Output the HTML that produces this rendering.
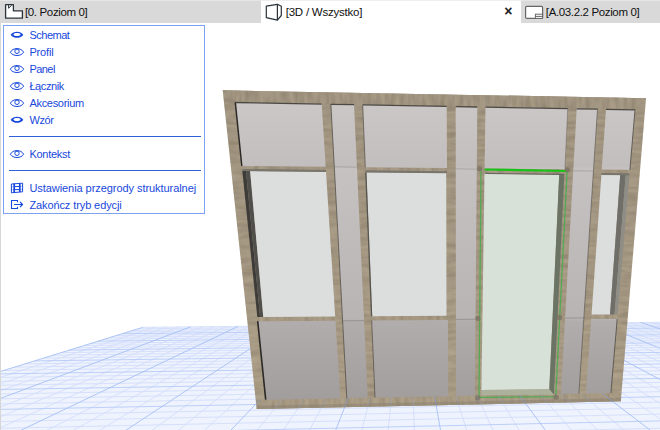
<!DOCTYPE html>
<html lang="pl"><head><meta charset="utf-8"><title>Edycja przegrody strukturalnej</title>
<style>
html,body{margin:0;padding:0;}
body{width:660px;height:430px;overflow:hidden;background:#fff;position:relative;font-family:"Liberation Sans",sans-serif;}
#scene{position:absolute;left:0;top:0;width:660px;height:430px;}
#tabs{position:absolute;left:0;top:0;width:660px;height:23px;background:#d9d9d9;box-shadow:inset 0 1px 0 #e6e6e6;}
#tabs .act{position:absolute;left:261px;top:0;width:260px;height:23px;background:#fff;box-shadow:inset 0 1px 0 #eee;}
.tab{position:absolute;top:0;height:23px;line-height:24px;font-size:11.5px;color:#111;white-space:nowrap;}
.tab svg{position:absolute;top:0;left:0;}
#lb{position:absolute;left:0;top:23px;width:1px;height:407px;background:#d6d6d6;}
#pal{position:absolute;left:3px;top:25px;width:200px;height:187px;border:1px solid #7aa2f0;background:#fff;}
.it{position:absolute;left:25.4px;font-size:11px;color:#1848dc;white-space:nowrap;line-height:14px;}
.ic{position:absolute;left:5px;}
.sep{position:absolute;left:5px;width:192px;height:1px;background:#2f62d8;}
</style></head><body>
<svg id="scene" width="660" height="430" viewBox="0 0 660 430">
<g id="grid">
<polygon points="142.8,327.3 1786.3,311.3 3300.3,384.2 -353.2,481.2" fill="#eff3fe"/>
<path id="gminh" d="M142.8 327.3L1786.3 311.3M137.9 328.8L1806.6 312.3M132.8 330.4L1827.6 313.3M127.6 332.0L1849.2 314.3M116.4 335.5L1894.4 316.5M110.5 337.3L1918.1 317.6M104.3 339.2L1942.5 318.8M91.2 343.3L1993.8 321.3M84.2 345.5L2020.8 322.6M76.9 347.8L2048.7 323.9M61.2 352.6L2107.6 326.8M52.8 355.2L2138.6 328.3M44.0 358.0L2170.8 329.8M24.9 363.9L2238.9 333.1M14.6 367.1L2274.9 334.8M3.8 370.4L2312.5 336.6M-19.8 377.8L2392.2 340.5M-32.7 381.8L2434.6 342.5M-46.3 386.0L2478.9 344.6M-76.4 395.3L2573.5 349.2M-92.9 400.5L2624.1 351.6M-110.7 406.0L2677.2 354.2M-150.2 418.2L2791.3 359.7M-172.3 425.1L2852.7 362.6M-196.2 432.5L2917.5 365.7M-250.6 449.4L3057.8 372.5M-281.5 459.0L3134.0 376.1M-315.6 469.6L3214.7 380.0" stroke="#d2defb" stroke-width="0.9" fill="none"/>
<path id="gmin" d="M154.8 327.2L-316.8 480.3M166.8 327.1L-280.6 479.3M178.7 327.0L-244.8 478.3M202.5 326.7L-173.9 476.5M214.4 326.6L-139.0 475.5M226.2 326.5L-104.3 474.6M249.7 326.3L-35.7 472.8M261.4 326.1L-1.8 471.9M273.1 326.0L31.8 471.0M296.4 325.8L98.2 469.2M308.0 325.7L131.1 468.4M319.5 325.6L163.6 467.5M342.5 325.4L228.0 465.8M353.9 325.2L259.9 464.9M365.4 325.1L291.4 464.1M388.1 324.9L353.9 462.4M399.4 324.8L384.7 461.6M410.7 324.7L415.4 460.8M433.2 324.5L475.9 459.2M444.4 324.4L505.9 458.4M455.6 324.3L535.6 457.6M477.8 324.0L594.4 456.0M488.9 323.9L623.5 455.3M499.9 323.8L652.3 454.5M521.9 323.6L709.4 453.0M532.9 323.5L737.6 452.2M543.8 323.4L765.7 451.5M565.5 323.2L821.1 450.0M576.4 323.1L848.5 449.3M587.2 323.0L875.8 448.6M608.7 322.8L929.7 447.1M619.4 322.7L956.3 446.4M630.1 322.6L982.8 445.7M651.4 322.4L1035.2 444.3M662.0 322.2L1061.1 443.6M672.6 322.1L1086.9 443.0M693.6 321.9L1137.8 441.6M704.1 321.8L1163.1 440.9M714.6 321.7L1188.1 440.3M735.4 321.5L1237.7 439.0M745.8 321.4L1262.2 438.3M756.1 321.3L1286.6 437.7M776.7 321.1L1334.9 436.4M787.0 321.0L1358.7 435.7M797.2 320.9L1382.5 435.1M817.6 320.7L1429.5 433.9M827.8 320.6L1452.7 433.2M837.9 320.5L1475.8 432.6M858.1 320.3L1521.6 431.4M868.1 320.2L1544.3 430.8M878.2 320.1L1566.8 430.2M898.1 320.0L1611.4 429.0M908.1 319.9L1633.5 428.4M918.0 319.8L1655.4 427.9M937.7 319.6L1698.9 426.7M947.6 319.5L1720.4 426.1M957.4 319.4L1741.8 425.6M977.0 319.2L1784.2 424.4M986.7 319.1L1805.1 423.9M996.4 319.0L1826.0 423.3M1015.8 318.8L1867.3 422.2M1025.4 318.7L1887.8 421.7M1035.0 318.6L1908.2 421.1M1054.2 318.4L1948.5 420.1M1063.7 318.3L1968.5 419.5M1073.2 318.2L1988.3 419.0M1092.2 318.1L2027.7 418.0M1101.6 318.0L2047.2 417.4M1111.0 317.9L2066.6 416.9M1129.8 317.7L2105.0 415.9M1139.2 317.6L2124.0 415.4M1148.5 317.5L2142.9 414.9M1167.1 317.3L2180.4 413.9M1176.3 317.2L2199.0 413.4M1185.5 317.2L2217.5 412.9M1203.9 317.0L2254.1 411.9M1213.1 316.9L2272.3 411.5M1222.2 316.8L2290.4 411.0M1240.4 316.6L2326.2 410.0M1249.5 316.5L2343.9 409.6M1258.6 316.4L2361.5 409.1M1276.6 316.3L2396.5 408.2M1285.6 316.2L2413.9 407.7M1294.5 316.1L2431.1 407.2M1312.4 315.9L2465.3 406.3M1321.3 315.8L2482.3 405.9M1330.1 315.7L2499.1 405.4M1347.8 315.6L2532.6 404.6M1356.6 315.5L2549.1 404.1M1365.4 315.4L2565.6 403.7M1382.9 315.2L2598.3 402.8M1391.6 315.2L2614.5 402.4M1400.3 315.1L2630.7 401.9M1417.6 314.9L2662.7 401.1M1426.3 314.8L2678.5 400.7M1434.9 314.7L2694.3 400.3M1452.0 314.6L2725.6 399.4M1460.6 314.5L2741.1 399.0M1469.1 314.4L2756.6 398.6M1486.1 314.2L2787.2 397.8M1494.6 314.1L2802.4 397.4M1503.0 314.1L2817.5 397.0M1519.8 313.9L2847.5 396.2M1528.2 313.8L2862.4 395.8M1536.6 313.7L2877.2 395.4M1553.3 313.6L2906.5 394.6M1561.6 313.5L2921.1 394.2M1569.9 313.4L2935.6 393.8M1586.4 313.3L2964.4 393.1M1594.6 313.2L2978.6 392.7M1602.8 313.1L2992.8 392.3M1619.2 312.9L3021.0 391.6M1627.3 312.9L3035.0 391.2M1635.4 312.8L3048.9 390.8M1651.6 312.6L3076.5 390.1M1659.7 312.5L3090.2 389.7M1667.8 312.5L3103.8 389.4M1683.8 312.3L3130.9 388.7M1691.8 312.2L3144.3 388.3M1699.8 312.2L3157.7 387.9M1715.7 312.0L3184.2 387.2M1723.6 311.9L3197.3 386.9M1731.5 311.8L3210.4 386.5M1747.3 311.7L3236.4 385.8M1755.1 311.6L3249.3 385.5M1762.9 311.5L3262.2 385.2M1778.5 311.4L3287.7 384.5M1786.3 311.3L3300.3 384.2" stroke="#d2defb" stroke-width="0.9" fill="none"/>
<path id="gmajh" d="M122.1 333.7L1871.4 315.4M97.9 341.2L1967.7 320.0M69.2 350.1L2077.6 325.3M34.7 360.9L2204.2 331.4M-7.7 374.0L2351.5 338.5M-60.9 390.5L2525.1 346.9M-129.7 411.9L2732.8 356.8M-222.2 440.6L2985.7 369.0M-353.2 481.2L3300.3 384.2" stroke="#b7cbf7" stroke-width="0.9" fill="none"/>
<path id="gmaj" d="M142.8 327.3L-353.2 481.2M190.7 326.8L-209.2 477.4M238.0 326.4L-69.8 473.7M284.8 325.9L65.2 470.1M331.0 325.5L196.0 466.6M376.7 325.0L322.8 463.3M422.0 324.6L445.8 460.0M466.7 324.1L565.1 456.8M510.9 323.7L681.0 453.7M554.7 323.3L793.5 450.8M598.0 322.9L902.8 447.9M640.8 322.5L1009.1 445.0M683.1 322.0L1112.4 442.3M725.0 321.6L1213.0 439.6M766.4 321.2L1310.8 437.0M807.4 320.8L1406.0 434.5M848.0 320.4L1498.8 432.0M888.2 320.0L1589.1 429.6M927.9 319.7L1677.2 427.3M967.2 319.3L1763.0 425.0M1006.1 318.9L1846.7 422.8M1044.6 318.5L1928.4 420.6M1082.7 318.2L2008.1 418.5M1120.4 317.8L2085.8 416.4M1157.8 317.4L2161.7 414.4M1194.8 317.1L2235.9 412.4M1231.4 316.7L2308.3 410.5M1267.6 316.4L2379.1 408.6M1303.5 316.0L2448.3 406.8M1339.0 315.7L2515.9 405.0M1374.1 315.3L2582.0 403.2M1409.0 315.0L2646.7 401.5M1443.5 314.6L2710.0 399.8M1477.6 314.3L2771.9 398.2M1511.4 314.0L2832.6 396.6M1544.9 313.7L2891.9 395.0M1578.1 313.3L2950.0 393.5M1611.0 313.0L3007.0 391.9M1643.5 312.7L3062.7 390.5M1675.8 312.4L3117.4 389.0M1707.7 312.1L3171.0 387.6M1739.4 311.8L3223.5 386.2M1770.7 311.5L3274.9 384.8" stroke="#a6bff5" stroke-width="0.9" fill="none"/>
</g>
<defs>
<linearGradient id="pg" gradientUnits="userSpaceOnUse" x1="0" y1="100" x2="0" y2="400"><stop offset="0.01" stop-color="#cbc7c6"/><stop offset="0.223" stop-color="#c2bebd"/><stop offset="0.227" stop-color="#c6c2c1"/><stop offset="0.73" stop-color="#b8b4b3"/><stop offset="0.737" stop-color="#b1adac"/><stop offset="0.99" stop-color="#a29e9d"/></linearGradient>
<linearGradient id="rvL" x1="0" y1="0" x2="1" y2="0"><stop offset="0" stop-color="#4f4e49"/><stop offset="1" stop-color="#8b8a84"/></linearGradient>
<linearGradient id="rvR" x1="0" y1="0" x2="1" y2="0"><stop offset="0" stop-color="#63625c"/><stop offset="1" stop-color="#8d8c85"/></linearGradient>
<linearGradient id="fg" gradientUnits="userSpaceOnUse" x1="0" y1="90" x2="0" y2="410"><stop offset="0" stop-color="#9f9481"/><stop offset="0.5" stop-color="#a39783"/><stop offset="1" stop-color="#a99c86"/></linearGradient>
<filter id="texd" x="0" y="0" width="100%" height="100%" color-interpolation-filters="sRGB"><feTurbulence type="fractalNoise" baseFrequency="0.05 0.22" numOctaves="2" seed="4"/><feColorMatrix type="matrix" values="0 0 0 0 0.42  0 0 0 0 0.36  0 0 0 0 0.28  2.6 0 0 0 -0.9"/><feComposite in2="SourceGraphic" operator="in"/></filter>
<filter id="texl" x="0" y="0" width="100%" height="100%" color-interpolation-filters="sRGB"><feTurbulence type="fractalNoise" baseFrequency="0.05 0.2" numOctaves="2" seed="11"/><feColorMatrix type="matrix" values="0 0 0 0 0.82  0 0 0 0 0.75  0 0 0 0 0.63  2.6 0 0 0 -0.9"/><feComposite in2="SourceGraphic" operator="in"/></filter>
<filter id="texdh" x="0" y="0" width="100%" height="100%" color-interpolation-filters="sRGB"><feTurbulence type="fractalNoise" baseFrequency="0.22 0.05" numOctaves="2" seed="7"/><feColorMatrix type="matrix" values="0 0 0 0 0.42  0 0 0 0 0.36  0 0 0 0 0.28  2.6 0 0 0 -0.9"/><feComposite in2="SourceGraphic" operator="in"/></filter>
<filter id="texlh" x="0" y="0" width="100%" height="100%" color-interpolation-filters="sRGB"><feTurbulence type="fractalNoise" baseFrequency="0.2 0.05" numOctaves="2" seed="15"/><feColorMatrix type="matrix" values="0 0 0 0 0.82  0 0 0 0 0.75  0 0 0 0 0.63  2.6 0 0 0 -0.9"/><feComposite in2="SourceGraphic" operator="in"/></filter>
</defs>
<polygon points="222.7,90.3 646.0,98.2 620.8,401.3 256.7,409.0" fill="url(#fg)"/>
<polygon points="222.7,90.3 646.0,98.2 620.8,401.3 256.7,409.0" fill="#000" filter="url(#texd)" opacity="0.22"/>
<polygon points="222.7,90.3 646.0,98.2 620.8,401.3 256.7,409.0" fill="#000" filter="url(#texl)" opacity="0.22"/>
<path d="M222.7 90.3L646.0 98.2L635.0 109.7L235.3 102.3ZM265.7 399.7L610.9 393.0L620.8 401.3L256.7 409.0ZM241.8 166.0L325.7 166.8L326.0 171.8L242.3 170.8ZM257.3 317.0L335.2 316.5L335.5 320.7L257.7 321.2ZM365.3 167.2L447.0 168.0L447.1 173.1L365.5 172.2ZM371.6 316.2L447.8 315.7L447.9 320.0L371.7 320.5ZM601.7 169.5L629.9 169.8L629.4 175.1L601.4 174.8ZM591.6 314.6L617.6 314.5L617.2 319.0L591.2 319.1ZM484.6 168.4L564.9 169.2L564.6 174.8L484.5 173.8Z" fill="url(#fg)"/>
<path d="M222.7 90.3L646.0 98.2L635.0 109.7L235.3 102.3ZM265.7 399.7L610.9 393.0L620.8 401.3L256.7 409.0ZM241.8 166.0L325.7 166.8L326.0 171.8L242.3 170.8ZM257.3 317.0L335.2 316.5L335.5 320.7L257.7 321.2ZM365.3 167.2L447.0 168.0L447.1 173.1L365.5 172.2ZM371.6 316.2L447.8 315.7L447.9 320.0L371.7 320.5ZM601.7 169.5L629.9 169.8L629.4 175.1L601.4 174.8ZM591.6 314.6L617.6 314.5L617.2 319.0L591.2 319.1ZM484.6 168.4L564.9 169.2L564.6 174.8L484.5 173.8Z" fill="#000" filter="url(#texdh)" opacity="0.22"/>
<path d="M222.7 90.3L646.0 98.2L635.0 109.7L235.3 102.3ZM265.7 399.7L610.9 393.0L620.8 401.3L256.7 409.0ZM241.8 166.0L325.7 166.8L326.0 171.8L242.3 170.8ZM257.3 317.0L335.2 316.5L335.5 320.7L257.7 321.2ZM365.3 167.2L447.0 168.0L447.1 173.1L365.5 172.2ZM371.6 316.2L447.8 315.7L447.9 320.0L371.7 320.5ZM601.7 169.5L629.9 169.8L629.4 175.1L601.4 174.8ZM591.6 314.6L617.6 314.5L617.2 319.0L591.2 319.1ZM484.6 168.4L564.9 169.2L564.6 174.8L484.5 173.8Z" fill="#000" filter="url(#texlh)" opacity="0.22"/>
<path d="M222.7 90.3L235.3 102.3" stroke="#8d8474" stroke-width="0.8" stroke-opacity="0.45"/>
<path d="M646.0 98.2L635.0 109.7" stroke="#8d8474" stroke-width="0.8" stroke-opacity="0.45"/>
<path d="M620.8 401.3L610.9 393.0" stroke="#8d8474" stroke-width="0.8" stroke-opacity="0.45"/>
<path d="M256.7 409.0L265.7 399.7" stroke="#8d8474" stroke-width="0.8" stroke-opacity="0.45"/>
<polygon points="235.3,102.3 321.7,103.9 325.7,166.8 241.8,166.0" fill="url(#pg)"/>
<polygon points="257.7,321.2 335.5,320.7 340.4,398.3 265.7,399.7" fill="url(#pg)"/>
<polygon points="330.9,104.1 354.0,104.5 367.7,397.7 346.8,398.1" fill="url(#pg)"/>
<path d="M334.3 166.8L356.9 167.2" stroke="#a9a5a1" stroke-width="1"/>
<path d="M342.6 320.8L364.1 320.6" stroke="#989490" stroke-width="1"/>
<polygon points="362.7,104.7 446.7,106.2 447.0,168.0 365.3,167.2" fill="url(#pg)"/>
<polygon points="371.7,320.5 447.9,320.0 448.3,396.2 375.0,397.6" fill="url(#pg)"/>
<polygon points="455.7,106.4 477.3,106.8 474.9,395.6 456.0,396.0" fill="url(#pg)"/>
<path d="M455.8 168.8L476.8 169.2" stroke="#a9a5a1" stroke-width="1"/>
<path d="M455.9 319.4L475.5 319.2" stroke="#989490" stroke-width="1"/>
<polygon points="485.5,106.9 567.7,108.5 564.9,169.2 484.6,168.4" fill="url(#pg)"/>
<polygon points="576.7,108.6 597.5,109.0 578.9,393.6 560.9,394.0" fill="url(#pg)"/>
<path d="M573.3 170.8L593.5 171.1" stroke="#a9a5a1" stroke-width="1"/>
<path d="M565.1 318.1L583.9 317.9" stroke="#989490" stroke-width="1"/>
<polygon points="606.0,109.2 635.0,109.7 629.9,169.8 601.7,169.5" fill="url(#pg)"/>
<polygon points="591.2,319.1 617.2,319.0 610.9,393.0 586.0,393.5" fill="url(#pg)"/>
<path d="M235.3 102.5L321.7 104.1" stroke="#3f3d39" stroke-width="1.3" stroke-opacity="0.90" fill="none"/>
<path d="M330.9 104.3L354.0 104.7" stroke="#3f3d39" stroke-width="1.3" stroke-opacity="0.90" fill="none"/>
<path d="M362.7 104.9L446.7 106.4" stroke="#3f3d39" stroke-width="1.3" stroke-opacity="0.90" fill="none"/>
<path d="M455.7 106.6L477.3 107.0" stroke="#3f3d39" stroke-width="1.3" stroke-opacity="0.90" fill="none"/>
<path d="M485.5 107.1L567.7 108.7" stroke="#3f3d39" stroke-width="1.3" stroke-opacity="0.90" fill="none"/>
<path d="M576.7 108.8L597.5 109.2" stroke="#3f3d39" stroke-width="1.3" stroke-opacity="0.90" fill="none"/>
<path d="M606.0 109.4L635.0 109.9" stroke="#3f3d39" stroke-width="1.3" stroke-opacity="0.90" fill="none"/>
<path d="M235.3 102.3L241.8 166.0" stroke="#2b2a27" stroke-width="1.5" stroke-opacity="1.00" fill="none"/>
<path d="M257.7 321.2L265.7 399.7" stroke="#2b2a27" stroke-width="1.6" stroke-opacity="1.00" fill="none"/>
<path d="M330.9 104.1L346.8 398.1" stroke="#3f3d39" stroke-width="1.0" stroke-opacity="0.65" fill="none"/>
<path d="M362.7 104.7L365.3 167.2" stroke="#3f3d39" stroke-width="1.0" stroke-opacity="0.60" fill="none"/>
<path d="M371.7 320.5L375.0 397.6" stroke="#3f3d39" stroke-width="1.0" stroke-opacity="0.60" fill="none"/>
<path d="M567.7 108.5L564.9 169.2" stroke="#3f3d39" stroke-width="1.0" stroke-opacity="0.30" fill="none"/>
<path d="M597.5 109.0L578.9 393.6" stroke="#3f3d39" stroke-width="1.0" stroke-opacity="0.50" fill="none"/>
<path d="M635.0 109.7L629.9 169.8" stroke="#3f3d39" stroke-width="1.0" stroke-opacity="0.70" fill="none"/>
<path d="M617.2 319.0L610.9 393.0" stroke="#3f3d39" stroke-width="1.0" stroke-opacity="0.70" fill="none"/>
<linearGradient id="rv1" gradientUnits="userSpaceOnUse" x1="247" y1="240" x2="255" y2="239.3"><stop offset="0" stop-color="#3b3a37"/><stop offset="0.45" stop-color="#43423f"/><stop offset="0.55" stop-color="#53524e"/><stop offset="1" stop-color="#5d5c57"/></linearGradient>
<linearGradient id="rv7" gradientUnits="userSpaceOnUse" x1="615" y1="240" x2="624.5" y2="240.8"><stop offset="0" stop-color="#6b6a65"/><stop offset="0.55" stop-color="#74736d"/><stop offset="0.65" stop-color="#8b8a83"/><stop offset="1" stop-color="#939189"/></linearGradient>
<polygon points="242.3,170.8 246.0,170.9 260.1,317.0 257.3,317.0" fill="#3d3c39"/>
<polygon points="246.0,170.9 250.1,170.9 263.3,317.0 260.1,317.0" fill="#504f4b"/>
<polygon points="250.1,170.9 326.0,171.8 335.2,316.5 263.3,317.0" fill="#dcdedd"/>
<polygon points="366.4,172.2 446.2,173.1 446.5,315.7 372.2,316.2" fill="#dcdedd"/>
<path d="M365.8 172.2L371.6 316.2" stroke="#55544f" stroke-width="1.3"/>
<polygon points="484.5,173.8 559.2,174.7 549.3,389.3 481.4,390.0" fill="#d7e1d8"/>
<polygon points="559.2,174.7 564.3,174.8 553.9,394.7 549.3,389.3" fill="#6b7364"/>
<polygon points="481.4,390.0 549.3,389.3 553.9,394.7 481.3,395.2" fill="#abb19b"/>
<polygon points="601.4,174.8 620.2,175.0 610.0,314.5 591.6,314.6" fill="#dcdedd"/>
<polygon points="620.2,175.0 625.7,175.1 614.5,314.5 610.0,314.5" fill="#6f6e69"/>
<polygon points="625.7,175.1 629.4,175.1 617.6,314.5 614.5,314.5" fill="#8e8d86"/>
<polygon points="242.3,168.9 326.0,169.9 326.0,172.0 242.3,171.0" fill="#77756c"/>
<polygon points="365.5,170.3 447.1,171.2 447.1,173.3 365.5,172.4" fill="#77756c"/>
<polygon points="601.4,172.9 629.4,173.2 629.4,175.3 601.4,175.0" fill="#77756c"/>
<path d="M481 168.5L479 397.3L555.7 396.7L567.2 169.8" stroke="#52ab52" stroke-width="1.25" fill="none"/>
<path d="M484.6 169.5L566.5 171" stroke="#18c318" stroke-width="2.2" fill="none"/>
<path d="M485.3 173.4L564.3 174.4" stroke="#66655e" stroke-width="1.1" fill="none"/>
<circle cx="479.6" cy="168.8" r="2.6" fill="#7c7465" fill-opacity="0.85"/>
<circle cx="567.5" cy="169.8" r="2.6" fill="#7c7465" fill-opacity="0.85"/>
<circle cx="477.9" cy="318.3" r="2.6" fill="#7c7465" fill-opacity="0.85"/>
<circle cx="559.6" cy="317.4" r="2.6" fill="#7c7465" fill-opacity="0.85"/>
<circle cx="477.7" cy="397.8" r="2.6" fill="#7c7465" fill-opacity="0.85"/>
<circle cx="556.2" cy="397.2" r="2.6" fill="#7c7465" fill-opacity="0.85"/>
<polygon points="256.3,405.8 621.1,398.1 620.8,401.3 256.7,409.0" fill="#857c6c" opacity="0.45"/>
<clipPath id="bfc"><polygon points="255.7,399.9 621.5,392.8 620.8,401.3 256.7,409.0"/></clipPath>
<g clip-path="url(#bfc)"><path d="M142.8 327.3L-353.2 481.2M190.7 326.8L-209.2 477.4M238.0 326.4L-69.8 473.7M284.8 325.9L65.2 470.1M331.0 325.5L196.0 466.6M376.7 325.0L322.8 463.3M422.0 324.6L445.8 460.0M466.7 324.1L565.1 456.8M510.9 323.7L681.0 453.7M554.7 323.3L793.5 450.8M598.0 322.9L902.8 447.9M640.8 322.5L1009.1 445.0M683.1 322.0L1112.4 442.3M725.0 321.6L1213.0 439.6M766.4 321.2L1310.8 437.0M807.4 320.8L1406.0 434.5M848.0 320.4L1498.8 432.0M888.2 320.0L1589.1 429.6M927.9 319.7L1677.2 427.3M967.2 319.3L1763.0 425.0M1006.1 318.9L1846.7 422.8M1044.6 318.5L1928.4 420.6M1082.7 318.2L2008.1 418.5M1120.4 317.8L2085.8 416.4M1157.8 317.4L2161.7 414.4M1194.8 317.1L2235.9 412.4M1231.4 316.7L2308.3 410.5M1267.6 316.4L2379.1 408.6M1303.5 316.0L2448.3 406.8M1339.0 315.7L2515.9 405.0M1374.1 315.3L2582.0 403.2M1409.0 315.0L2646.7 401.5M1443.5 314.6L2710.0 399.8M1477.6 314.3L2771.9 398.2M1511.4 314.0L2832.6 396.6M1544.9 313.7L2891.9 395.0M1578.1 313.3L2950.0 393.5M1611.0 313.0L3007.0 391.9M1643.5 312.7L3062.7 390.5M1675.8 312.4L3117.4 389.0M1707.7 312.1L3171.0 387.6M1739.4 311.8L3223.5 386.2M1770.7 311.5L3274.9 384.8" stroke="#7d9ce6" stroke-width="0.9" stroke-opacity="0.6" fill="none"/><path d="M154.8 327.2L-316.8 480.3M166.8 327.1L-280.6 479.3M178.7 327.0L-244.8 478.3M202.5 326.7L-173.9 476.5M214.4 326.6L-139.0 475.5M226.2 326.5L-104.3 474.6M249.7 326.3L-35.7 472.8M261.4 326.1L-1.8 471.9M273.1 326.0L31.8 471.0M296.4 325.8L98.2 469.2M308.0 325.7L131.1 468.4M319.5 325.6L163.6 467.5M342.5 325.4L228.0 465.8M353.9 325.2L259.9 464.9M365.4 325.1L291.4 464.1M388.1 324.9L353.9 462.4M399.4 324.8L384.7 461.6M410.7 324.7L415.4 460.8M433.2 324.5L475.9 459.2M444.4 324.4L505.9 458.4M455.6 324.3L535.6 457.6M477.8 324.0L594.4 456.0M488.9 323.9L623.5 455.3M499.9 323.8L652.3 454.5M521.9 323.6L709.4 453.0M532.9 323.5L737.6 452.2M543.8 323.4L765.7 451.5M565.5 323.2L821.1 450.0M576.4 323.1L848.5 449.3M587.2 323.0L875.8 448.6M608.7 322.8L929.7 447.1M619.4 322.7L956.3 446.4M630.1 322.6L982.8 445.7M651.4 322.4L1035.2 444.3M662.0 322.2L1061.1 443.6M672.6 322.1L1086.9 443.0M693.6 321.9L1137.8 441.6M704.1 321.8L1163.1 440.9M714.6 321.7L1188.1 440.3M735.4 321.5L1237.7 439.0M745.8 321.4L1262.2 438.3M756.1 321.3L1286.6 437.7M776.7 321.1L1334.9 436.4M787.0 321.0L1358.7 435.7M797.2 320.9L1382.5 435.1M817.6 320.7L1429.5 433.9M827.8 320.6L1452.7 433.2M837.9 320.5L1475.8 432.6M858.1 320.3L1521.6 431.4M868.1 320.2L1544.3 430.8M878.2 320.1L1566.8 430.2M898.1 320.0L1611.4 429.0M908.1 319.9L1633.5 428.4M918.0 319.8L1655.4 427.9M937.7 319.6L1698.9 426.7M947.6 319.5L1720.4 426.1M957.4 319.4L1741.8 425.6M977.0 319.2L1784.2 424.4M986.7 319.1L1805.1 423.9M996.4 319.0L1826.0 423.3M1015.8 318.8L1867.3 422.2M1025.4 318.7L1887.8 421.7M1035.0 318.6L1908.2 421.1M1054.2 318.4L1948.5 420.1M1063.7 318.3L1968.5 419.5M1073.2 318.2L1988.3 419.0M1092.2 318.1L2027.7 418.0M1101.6 318.0L2047.2 417.4M1111.0 317.9L2066.6 416.9M1129.8 317.7L2105.0 415.9M1139.2 317.6L2124.0 415.4M1148.5 317.5L2142.9 414.9M1167.1 317.3L2180.4 413.9M1176.3 317.2L2199.0 413.4M1185.5 317.2L2217.5 412.9M1203.9 317.0L2254.1 411.9M1213.1 316.9L2272.3 411.5M1222.2 316.8L2290.4 411.0M1240.4 316.6L2326.2 410.0M1249.5 316.5L2343.9 409.6M1258.6 316.4L2361.5 409.1M1276.6 316.3L2396.5 408.2M1285.6 316.2L2413.9 407.7M1294.5 316.1L2431.1 407.2M1312.4 315.9L2465.3 406.3M1321.3 315.8L2482.3 405.9M1330.1 315.7L2499.1 405.4M1347.8 315.6L2532.6 404.6M1356.6 315.5L2549.1 404.1M1365.4 315.4L2565.6 403.7M1382.9 315.2L2598.3 402.8M1391.6 315.2L2614.5 402.4M1400.3 315.1L2630.7 401.9M1417.6 314.9L2662.7 401.1M1426.3 314.8L2678.5 400.7M1434.9 314.7L2694.3 400.3M1452.0 314.6L2725.6 399.4M1460.6 314.5L2741.1 399.0M1469.1 314.4L2756.6 398.6M1486.1 314.2L2787.2 397.8M1494.6 314.1L2802.4 397.4M1503.0 314.1L2817.5 397.0M1519.8 313.9L2847.5 396.2M1528.2 313.8L2862.4 395.8M1536.6 313.7L2877.2 395.4M1553.3 313.6L2906.5 394.6M1561.6 313.5L2921.1 394.2M1569.9 313.4L2935.6 393.8M1586.4 313.3L2964.4 393.1M1594.6 313.2L2978.6 392.7M1602.8 313.1L2992.8 392.3M1619.2 312.9L3021.0 391.6M1627.3 312.9L3035.0 391.2M1635.4 312.8L3048.9 390.8M1651.6 312.6L3076.5 390.1M1659.7 312.5L3090.2 389.7M1667.8 312.5L3103.8 389.4M1683.8 312.3L3130.9 388.7M1691.8 312.2L3144.3 388.3M1699.8 312.2L3157.7 387.9M1715.7 312.0L3184.2 387.2M1723.6 311.9L3197.3 386.9M1731.5 311.8L3210.4 386.5M1747.3 311.7L3236.4 385.8M1755.1 311.6L3249.3 385.5M1762.9 311.5L3262.2 385.2M1778.5 311.4L3287.7 384.5M1786.3 311.3L3300.3 384.2" stroke="#8aa6ea" stroke-width="0.9" stroke-opacity="0.3" fill="none"/></g>
</svg>
<div id="lb"></div>
<div id="tabs"><div class="act"></div>
<div class="tab" style="left:0;width:120px"><svg width="26" height="23" viewBox="0 0 26 23"><path d="M5.6 4.6H13.4V10.8H22.4V18.2H5.6Z" fill="#fff" stroke="#2b333a" stroke-width="1.3" stroke-linejoin="round"/><path d="M8.6 5V8.3L11.6 5.2" stroke="#2b333a" stroke-width="1" fill="none"/></svg><span style="position:absolute;left:25px;letter-spacing:-0.36px">[0. Poziom 0]</span></div>
<div class="tab" style="left:261px;width:260px"><svg width="26" height="23" viewBox="0 0 26 23"><path d="M5.3 6.2L16.4 4.3L20.3 6.2V15.5L16.4 20.2L5.3 17.6Z" fill="#fff" stroke="#2b333a" stroke-width="1.2" stroke-linejoin="round"/><path d="M16.4 4.3V20.2" stroke="#2b333a" stroke-width="1.2"/></svg><span style="position:absolute;left:24.7px;letter-spacing:-0.22px">[3D / Wszystko]</span><span style="position:absolute;left:243.3px;top:-1.5px;font-size:14px;font-weight:bold;color:#222">&#215;</span></div>
<div class="tab" style="left:521px;width:139px"><svg width="26" height="23" viewBox="0 0 26 23"><rect x="4.6" y="6.4" width="17" height="12" rx="1.2" fill="#fff" stroke="#666" stroke-width="1.2"/><rect x="14.4" y="14.2" width="7.2" height="4.2" fill="#fff" stroke="#666" stroke-width="1"/><path d="M14.4 16.4H21.6" stroke="#666" stroke-width="1"/></svg><span style="position:absolute;left:24.8px;letter-spacing:-0.36px">[A.03.2.2 Poziom 0]</span></div>
</div>
<div id="pal">
<svg class="ic" style="top:3px" width="16" height="12" viewBox="0 0 16 12"><path d="M1.7 5.7C4.2 1.6 11.8 1.6 14.3 5.7C11.8 9.9 4.2 9.9 1.7 5.7ZM4.3 5.5C5.6 7.6 10.4 7.6 11.7 5.5C10.4 3.6 5.6 3.6 4.3 5.5Z" fill="#1848dc" fill-rule="evenodd"/></svg>
<div class="it" style="top:2px;letter-spacing:-0.49px">Schemat</div>
<svg class="ic" style="top:20px" width="16" height="12" viewBox="0 0 16 12"><path d="M1.4 6.2C3.6 1.4 12.4 1.4 14.6 6.2C12.4 10.6 3.6 10.6 1.4 6.2Z" fill="none" stroke="#1848dc" stroke-width="1"/><circle cx="8" cy="5.3" r="2.2" fill="none" stroke="#1848dc" stroke-width="1"/></svg>
<div class="it" style="top:19px;letter-spacing:-0.15px">Profil</div>
<svg class="ic" style="top:37px" width="16" height="12" viewBox="0 0 16 12"><path d="M1.4 6.2C3.6 1.4 12.4 1.4 14.6 6.2C12.4 10.6 3.6 10.6 1.4 6.2Z" fill="none" stroke="#1848dc" stroke-width="1"/><circle cx="8" cy="5.3" r="2.2" fill="none" stroke="#1848dc" stroke-width="1"/></svg>
<div class="it" style="top:36px;letter-spacing:-0.55px">Panel</div>
<svg class="ic" style="top:54px" width="16" height="12" viewBox="0 0 16 12"><path d="M1.4 6.2C3.6 1.4 12.4 1.4 14.6 6.2C12.4 10.6 3.6 10.6 1.4 6.2Z" fill="none" stroke="#1848dc" stroke-width="1"/><circle cx="8" cy="5.3" r="2.2" fill="none" stroke="#1848dc" stroke-width="1"/></svg>
<div class="it" style="top:53px;letter-spacing:-0.41px">Łącznik</div>
<svg class="ic" style="top:71px" width="16" height="12" viewBox="0 0 16 12"><path d="M1.4 6.2C3.6 1.4 12.4 1.4 14.6 6.2C12.4 10.6 3.6 10.6 1.4 6.2Z" fill="none" stroke="#1848dc" stroke-width="1"/><circle cx="8" cy="5.3" r="2.2" fill="none" stroke="#1848dc" stroke-width="1"/></svg>
<div class="it" style="top:70px;letter-spacing:-0.30px">Akcesorium</div>
<svg class="ic" style="top:88px" width="16" height="12" viewBox="0 0 16 12"><path d="M1.7 5.7C4.2 1.6 11.8 1.6 14.3 5.7C11.8 9.9 4.2 9.9 1.7 5.7ZM4.3 5.5C5.6 7.6 10.4 7.6 11.7 5.5C10.4 3.6 5.6 3.6 4.3 5.5Z" fill="#1848dc" fill-rule="evenodd"/></svg>
<div class="it" style="top:87px;letter-spacing:-0.37px">Wzór</div>
<svg class="ic" style="top:122px" width="16" height="12" viewBox="0 0 16 12"><path d="M1.4 6.2C3.6 1.4 12.4 1.4 14.6 6.2C12.4 10.6 3.6 10.6 1.4 6.2Z" fill="none" stroke="#1848dc" stroke-width="1"/><circle cx="8" cy="5.3" r="2.2" fill="none" stroke="#1848dc" stroke-width="1"/></svg>
<div class="it" style="top:121px;letter-spacing:-0.26px">Kontekst</div>
<svg class="ic" style="top:156px" width="16" height="12" viewBox="0 0 16 12"><path d="M2.4 2L13.6 1.2V9.8L2.4 10.8Z" fill="none" stroke="#1848dc" stroke-width="1"/><path d="M5.2 1.8V10.5M10.8 1.4V10" fill="none" stroke="#1848dc" stroke-width="1.7"/><path d="M5.2 4.5H10.8M5.2 7.6H10.8" fill="none" stroke="#1848dc" stroke-width="1"/><path d="M2.4 4.7H5M2.4 7.8H5M11 4.3H13.6M11 7.3H13.6" fill="none" stroke="#1848dc" stroke-width="0.8" stroke-opacity="0.5"/></svg>
<div class="it" style="top:155px;letter-spacing:-0.06px">Ustawienia przegrody strukturalnej</div>
<svg class="ic" style="top:173px" width="16" height="12" viewBox="0 0 16 12"><path d="M8.5 3.3V1.5H2.5V9.5H8.5V7.7" fill="none" stroke="#1848dc" stroke-width="1.1"/><path d="M5 5.5H13.5M11 3L13.6 5.5L11 8" fill="none" stroke="#1848dc" stroke-width="1.1"/></svg>
<div class="it" style="top:172px;letter-spacing:-0.10px">Zakończ tryb edycji</div>
<div class="sep" style="top:110px"></div>
<div class="sep" style="top:144px"></div>
</div>
</body></html>
